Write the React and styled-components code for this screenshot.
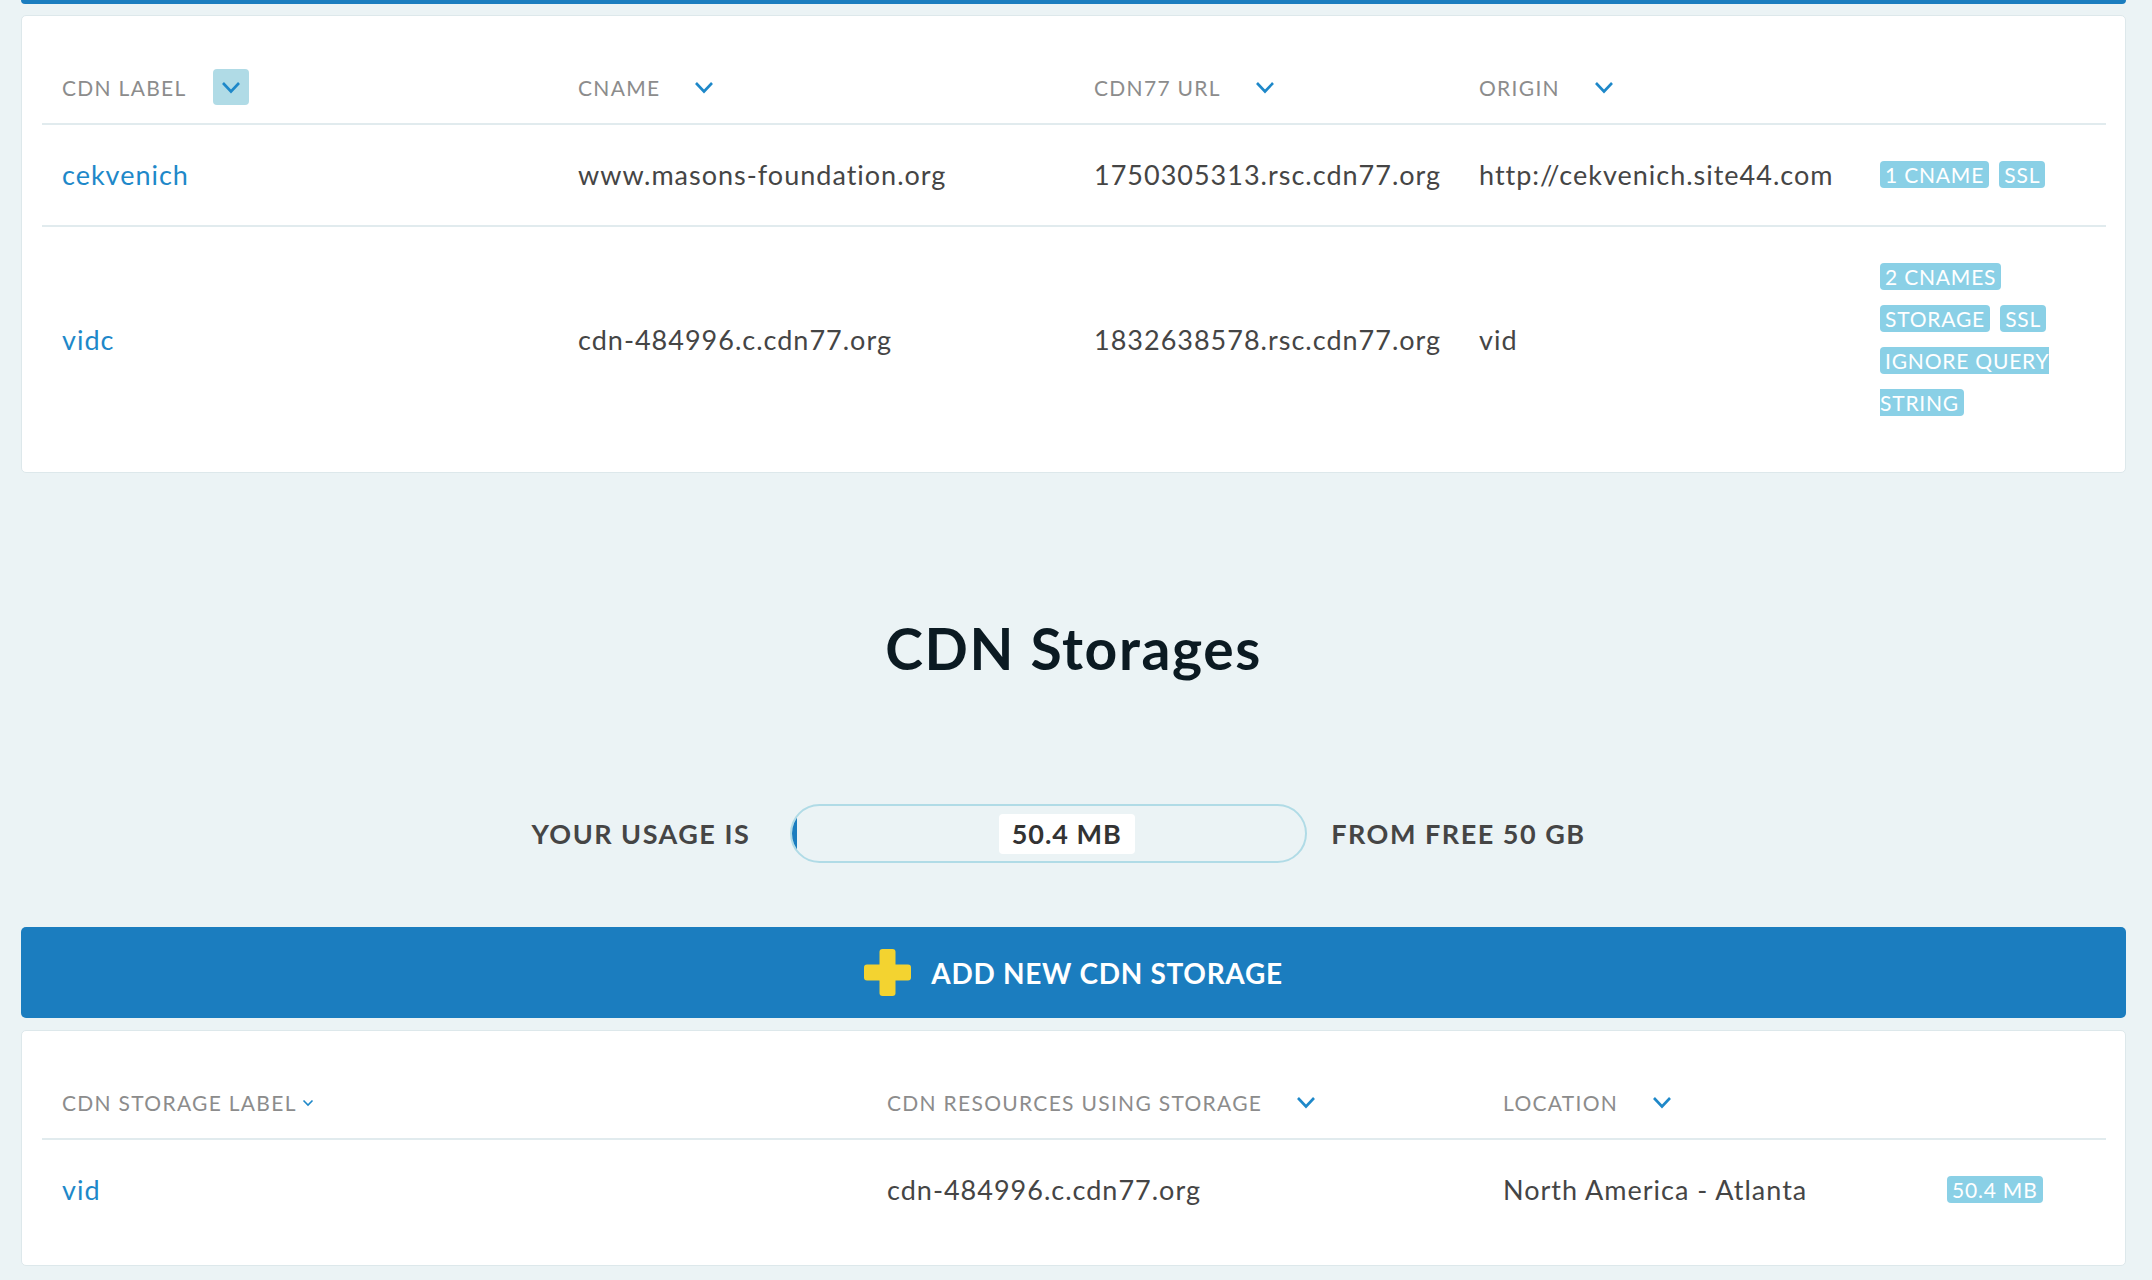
import React from "react";
import styled, { createGlobalStyle } from "styled-components";

const GlobalStyle = createGlobalStyle`
  html, body {
    margin: 0;
    padding: 0;
    background: #ebf3f5;
    font-family: Lato, "Open Sans", sans-serif;
  }
`;

const resources = [
  {
    label: "cekvenich",
    cname: "www.masons-foundation.org",
    url: "1750305313.rsc.cdn77.org",
    origin: "http://cekvenich.site44.com",
    tags: ["1 CNAME", "SSL"],
  },
  {
    label: "vidc",
    cname: "cdn-484996.c.cdn77.org",
    url: "1832638578.rsc.cdn77.org",
    origin: "vid",
    tags: ["2 CNAMES", "STORAGE", "SSL", "IGNORE QUERY STRING"],
  },
];

const storages = [
  {
    label: "vid",
    resources: "cdn-484996.c.cdn77.org",
    location: "North America - Atlanta",
    size: "50.4 MB",
  },
];

const usedMb = 50.4;
const freeMb = 50 * 1024;

function Chevron({ small }) {
  return small ? (
    <svg width="12" height="8" viewBox="0 0 12 8">
      <polyline points="1.5,1.5 6,6 10.5,1.5" fill="none" stroke="#1e88c9" strokeWidth="1.6" />
    </svg>
  ) : (
    <svg width="20" height="13" viewBox="0 0 20 13">
      <polyline points="2,2 10,10.5 18,2" fill="none" stroke="#1e88c9" strokeWidth="2.6" />
    </svg>
  );
}

function PlusIcon() {
  return (
    <svg width="47" height="47" viewBox="0 0 47 47">
      <rect x="15.5" y="0" width="16" height="47" rx="3" fill="#f3d330" />
      <rect x="0" y="15.5" width="47" height="16" rx="3" fill="#f3d330" />
    </svg>
  );
}

function Tags({ items }) {
  return items.map((t, i) => (
    <React.Fragment key={t}>
      {i > 0 && " "}
      <Tag>{t}</Tag>
    </React.Fragment>
  ));
}

export default function App() {
  const pct = Math.max((usedMb / freeMb) * 100, 1);

  return (
    <Page>
      <GlobalStyle />
      <TopStrip />

      <Card $mt={11}>
        <Table $cols="516px 516px 385px 401px 1fr">
          <HeadCell>
            CDN LABEL
            <SortButton $active>
              <Chevron />
            </SortButton>
          </HeadCell>
          <HeadCell>
            CNAME
            <SortButton>
              <Chevron />
            </SortButton>
          </HeadCell>
          <HeadCell>
            CDN77 URL
            <SortButton>
              <Chevron />
            </SortButton>
          </HeadCell>
          <HeadCell>
            ORIGIN
            <SortButton>
              <Chevron />
            </SortButton>
          </HeadCell>
          <HeadCell />

          {resources.map((r, i) => {
            const last = i === resources.length - 1;
            return (
              <React.Fragment key={r.label}>
                <Cell $last={last}>
                  <LinkText>{r.label}</LinkText>
                </Cell>
                <Cell $last={last}>{r.cname}</Cell>
                <Cell $last={last}>{r.url}</Cell>
                <Cell $last={last}>{r.origin}</Cell>
                <TagCell $last={last}>
                  <Tags items={r.tags} />
                </TagCell>
              </React.Fragment>
            );
          })}
        </Table>
      </Card>

      <Heading>CDN Storages</Heading>

      <UsageRow>
        <UsageText>YOUR USAGE IS</UsageText>
        <Bar>
          <BarFill style={{ width: `${pct}%` }} />
          <BarLabel>50.4 MB</BarLabel>
        </Bar>
        <UsageText $after>FROM FREE 50 GB</UsageText>
      </UsageRow>

      <AddButton>
        <PlusIcon />
        ADD NEW CDN STORAGE
      </AddButton>

      <Card $mt={12} $pb={25}>
        <Table $cols="825px 616px 444px 1fr">
          <HeadCell>
            CDN STORAGE LABEL
            <SmallSort>
              <Chevron small />
            </SmallSort>
          </HeadCell>
          <HeadCell>
            CDN RESOURCES USING STORAGE
            <SortButton>
              <Chevron />
            </SortButton>
          </HeadCell>
          <HeadCell>
            LOCATION
            <SortButton>
              <Chevron />
            </SortButton>
          </HeadCell>
          <HeadCell />

          {storages.map((s) => (
            <React.Fragment key={s.label}>
              <Cell $last>
                <LinkText>{s.label}</LinkText>
              </Cell>
              <Cell $last>{s.resources}</Cell>
              <Cell $last>{s.location}</Cell>
              <TagCell $last>
                <Tags items={[s.size]} />
              </TagCell>
            </React.Fragment>
          ))}
        </Table>
      </Card>
    </Page>
  );
}

const Page = styled.div`
  padding: 0 26px 40px 21px;
  min-height: 1280px;
  box-sizing: border-box;
`;

const TopStrip = styled.div`
  height: 4px;
  background: #1b7dbf;
  border-radius: 0 0 5px 5px;
`;

const Card = styled.div`
  margin-top: ${(p) => p.$mt}px;
  background: #fff;
  border: 1px solid #dde8eb;
  border-radius: 5px;
  padding: 19px 19px ${(p) => p.$pb || 19}px 20px;
`;

const Table = styled.div`
  display: grid;
  grid-template-columns: ${(p) => p.$cols};
`;

const HeadCell = styled.div`
  display: flex;
  align-items: center;
  height: 90px;
  box-sizing: border-box;
  padding: 16px 20px 0;
  border-bottom: 2px solid #e1ebee;
  font-size: 21px;
  letter-spacing: 1.3px;
  color: #8c8c8c;
  text-transform: uppercase;
  white-space: nowrap;
`;

const SortButton = styled.span`
  display: inline-flex;
  align-items: center;
  justify-content: center;
  width: 36px;
  height: 36px;
  margin-left: 26px;
  border-radius: 4px;
  background: ${(p) => (p.$active ? "#b0dbe6" : "transparent")};
`;

const SmallSort = styled.span`
  display: inline-flex;
  align-items: center;
  margin-left: 5px;
  margin-top: 2px;
`;

const Cell = styled.div`
  display: flex;
  align-items: center;
  padding: 29px 20px;
  font-size: 27px;
  letter-spacing: 1px;
  line-height: 42px;
  color: #454545;
  white-space: nowrap;
  border-bottom: ${(p) => (p.$last ? "none" : "2px solid #e1ebee")};
`;

const LinkText = styled.span`
  color: #1e88c9;
`;

const TagCell = styled.div`
  padding: 29px 20px;
  line-height: 42px;
  font-size: 21px;
  letter-spacing: 0.8px;
  border-bottom: ${(p) => (p.$last ? "none" : "2px solid #e1ebee")};
`;

const Tag = styled.span`
  background: #8ad0e6;
  color: #fff;
  padding: 1px 5px;
  margin-right: 4px;
  border-radius: 4px;
  text-transform: uppercase;
`;

const Heading = styled.h2`
  margin: 142px 0 0;
  text-align: center;
  font-size: 57px;
  letter-spacing: 1.6px;
  line-height: 67px;
  font-weight: 700;
  color: #0b1a22;
`;

const UsageRow = styled.div`
  display: flex;
  align-items: center;
  justify-content: center;
  margin-top: 122px;
  padding-right: 30px;
`;

const UsageText = styled.span`
  font-size: 27px;
  font-weight: 700;
  letter-spacing: 1.5px;
  color: #454545;
  margin: ${(p) => (p.$after ? "0 0 0 24px" : "0 40px 0 0")};
`;

const Bar = styled.div`
  position: relative;
  display: flex;
  align-items: center;
  justify-content: center;
  width: 517px;
  height: 59px;
  box-sizing: border-box;
  border: 2px solid #b0dbe6;
  border-radius: 30px;
  overflow: hidden;
  background: #ebf3f5;
`;

const BarFill = styled.div`
  position: absolute;
  left: 0;
  top: 0;
  bottom: 0;
  background: #1b7dbf;
`;

const BarLabel = styled.span`
  position: relative;
  margin-left: 36px;
  height: 40px;
  line-height: 40px;
  padding: 0 13px;
  background: #fff;
  border-radius: 4px;
  font-size: 27px;
  letter-spacing: 1px;
  font-weight: 700;
  color: #333;
`;

const AddButton = styled.div`
  margin-top: 64px;
  height: 91px;
  display: flex;
  align-items: center;
  justify-content: center;
  gap: 20px;
  background: #1b7dbf;
  border-radius: 5px;
  color: #fff;
  font-size: 28px;
  letter-spacing: 0.7px;
  font-weight: 700;
`;
